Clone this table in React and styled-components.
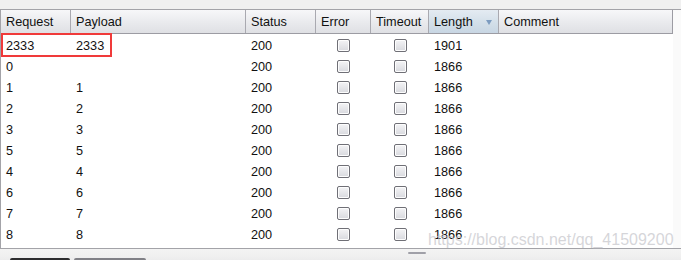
import styled, { createGlobalStyle } from 'styled-components';

const columns = [
  { key: 'request', label: 'Request', width: 70 },
  { key: 'payload', label: 'Payload', width: 175 },
  { key: 'status', label: 'Status', width: 70 },
  { key: 'error', label: 'Error', width: 55, check: true },
  { key: 'timeout', label: 'Timeout', width: 58, check: true },
  { key: 'length', label: 'Length', width: 70, sorted: true },
  { key: 'comment', label: 'Comment', width: 174 },
];

const results = [
  { request: '2333', payload: '2333', status: '200', length: '1901', marked: true },
  { request: '0', payload: '', status: '200', length: '1866' },
  { request: '1', payload: '1', status: '200', length: '1866' },
  { request: '2', payload: '2', status: '200', length: '1866' },
  { request: '3', payload: '3', status: '200', length: '1866' },
  { request: '5', payload: '5', status: '200', length: '1866' },
  { request: '4', payload: '4', status: '200', length: '1866' },
  { request: '6', payload: '6', status: '200', length: '1866' },
  { request: '7', payload: '7', status: '200', length: '1866' },
  { request: '8', payload: '8', status: '200', length: '1866' },
];

const template = columns.map((c) => `${c.width}px`).join(' ');

const GlobalStyle = createGlobalStyle`
  html, body {
    margin: 0;
    padding: 0;
    background: #f0f0f0;
  }
  body {
    font-family: "Liberation Sans", Arial, sans-serif;
    font-size: 12.7px;
    color: #111;
  }
`;

const Page = styled.div`
  width: 681px;
  height: 260px;
  overflow: hidden;
  padding-top: 9px;
  box-sizing: border-box;
  display: flex;
  flex-direction: column;
`;

const ScrollPane = styled.div`
  position: relative;
  flex: none;
  border-top: 1px solid #a3a3a8;
  border-left: 1px solid #a3a3a8;
  border-bottom: 1px solid #a3a3a8;
  background: #fafafa;
  height: 240px;
  box-sizing: border-box;
`;

const Table = styled.div`
  width: 672px;
  height: 100%;
  background: #fff;
`;

const HeaderRow = styled.div`
  display: grid;
  grid-template-columns: ${template};
  height: 24px;
  box-sizing: border-box;
  border-bottom: 1px solid #9c9ca3;
  border-right: 1px solid #9c9ca3;
  background: linear-gradient(#f7f7f9, #e9eaed 55%, #dfe0e4);
`;

const HeaderCell = styled.div`
  display: flex;
  align-items: center;
  justify-content: space-between;
  padding: 1px 6px 0 5px;
  border-right: 1px solid #a9a9b0;
  background: ${(p) => (p.$sorted ? 'linear-gradient(#e4ebf2, #d3dfe9 55%, #c8d6e3)' : 'transparent')};
  white-space: nowrap;
  &:last-child {
    border-right: none;
  }
`;

const SortArrow = styled.span`
  width: 0;
  height: 0;
  border-left: 3.5px solid transparent;
  border-right: 3.5px solid transparent;
  border-top: 5px solid #7d9cc0;
`;

const Row = styled.div`
  position: relative;
  display: grid;
  grid-template-columns: ${template};
  height: 21px;
`;

const Cell = styled.div`
  display: flex;
  align-items: center;
  justify-content: ${(p) => (p.$center ? 'center' : 'flex-start')};
  padding-left: ${(p) => (p.$center ? '0' : '5px')};
  padding-top: 2px;
`;

const CheckBox = styled.span`
  width: 11px;
  height: 11px;
  border: 1px solid #6f6f76;
  border-radius: 2px;
  background: linear-gradient(#f4f4f6, #d8d9de);
  box-shadow: inset 0 0 0 1px #fdfdfd;
`;

const Marker = styled.div`
  position: absolute;
  left: 0;
  top: -1px;
  width: 111px;
  height: 24px;
  box-sizing: border-box;
  border: 2px solid #f03a3a;
  pointer-events: none;
`;

const Watermark = styled.div`
  position: absolute;
  left: 427px;
  top: 221px;
  font-size: 16px;
  color: rgba(200, 200, 205, 0.75);
  white-space: nowrap;
`;

const BottomBar = styled.div`
  flex: 1;
  position: relative;
  background: linear-gradient(#f3f3f3, #f0f0f0 40%, #e6e6e8);
`;

const SplitHandle = styled.div`
  position: absolute;
  left: 408px;
  top: 3px;
  width: 18px;
  height: 2px;
  border-radius: 2px;
  background: #a0a0a8;
`;

const Tabs = styled.div`
  display: flex;
  gap: 4px;
  padding: 9px 0 0 10px;
`;

const Tab = styled.div`
  width: ${(p) => p.$w}px;
  height: 6px;
  border-top: 2px solid ${(p) => (p.$active ? '#2c2c2e' : '#808086')};
  border-radius: 2px 2px 0 0;
  background: #f4f4f4;
`;

export default function App() {
  return (
    <>
      <GlobalStyle />
      <Page>
        <ScrollPane>
          <Table>
            <HeaderRow>
              {columns.map((c) => (
                <HeaderCell key={c.key} $sorted={c.sorted}>
                  <span>{c.label}</span>
                  {c.sorted && <SortArrow />}
                </HeaderCell>
              ))}
            </HeaderRow>
            {results.map((r, i) => (
              <Row key={i}>
                {columns.map((c) =>
                  c.check ? (
                    <Cell key={c.key} $center>
                      <CheckBox />
                    </Cell>
                  ) : (
                    <Cell key={c.key}>{r[c.key]}</Cell>
                  )
                )}
                {r.marked && <Marker />}
              </Row>
            ))}
          </Table>
          <Watermark>https://blog.csdn.net/qq_41509200</Watermark>
        </ScrollPane>
        <BottomBar>
          <SplitHandle />
          <Tabs>
            <Tab $w={60} $active />
            <Tab $w={72} />
          </Tabs>
        </BottomBar>
      </Page>
    </>
  );
}
